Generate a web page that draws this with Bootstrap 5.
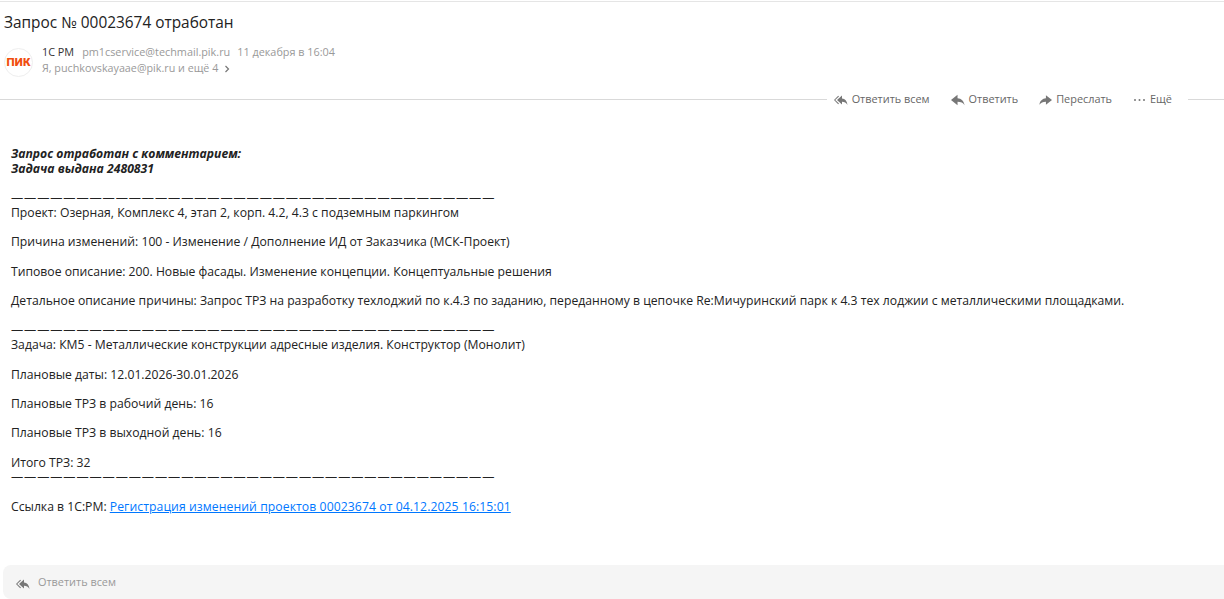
<!DOCTYPE html>
<html lang="ru">
<head>
    <meta charset="UTF-8">
    <meta name="viewport" content="width=device-width, initial-scale=1.0">
    <title>Запрос № 00023674 отработан</title>
    <link href="https://cdn.jsdelivr.net/npm/bootstrap@5.3.0/dist/css/bootstrap.min.css" rel="stylesheet">
    <style>
        html, body { height: 599px; overflow: hidden; }
        body { font-family: "Open Sans", "Liberation Sans", sans-serif; background: #fff; color: #000; border-top: 1px solid #e5e5e5; margin-top: 1px; }
        .mail-subject { font-size: 15.4px; line-height: 22px; padding: 10px 0 0 4px; color: #222; }
        .mail-head { padding: 14px 0 0 4px; height: 65px; }
        .pik-logo { width: 29px; height: 29px; border: 1px solid #eee; color: #f04e0f; font: 900 11.5px/26px Roboto, sans-serif; letter-spacing: .2px; text-align: center; }
        .mail-meta { font-size: 10.85px; line-height: 16px; color: #999; margin-left: 9px; margin-top: -4px; }
        .mail-from { color: #333; margin-right: 8px; }
        .mail-date { margin-left: 7px; }
        .mail-to { font-size: 10.75px; }
        .mail-actions { height: 1px; background: #d9d9d9; }
        .mail-actions-inner { background: #fff; margin-right: 36px; padding: 0 16px 0 7px; height: 20px; transform: translateY(-10px); gap: 21px; font-size: 10.9px; color: #666; }
        .act-ico { fill: #777; margin-top: 3px; }
        .mail-text { font-size: 12.2px; line-height: 14.7px; padding: 47px 0 0 11px; color: #222; height: 465px; }
        .mail-text a { color: #07f; letter-spacing: .08px; }
        .dash-line { letter-spacing: .9px; }
        .reply-box { height: 34px; margin: 0 0 0 3px; background: #f5f5f5; border-radius: 8px 0 0 8px; padding-left: 13px; gap: 8px; font-size: 10.9px; color: #999; }
    </style>
</head>
<body>
    <div class="mail-subject">Запрос № 00023674 отработан</div>
    <div class="mail-head d-flex">
        <div class="pik-logo rounded-circle flex-shrink-0">ПИК</div>
        <div class="mail-meta">
            <div><span class="mail-from">1С РМ</span>pm1cservice@techmail.pik.ru<span class="mail-date">11 декабря в 16:04</span></div>
            <div class="mail-to">Я, puchkovskayaae@pik.ru и ещё 4 &nbsp;<svg width="6" height="8" viewBox="0 0 6 8"><path d="M1.500 1l3 3-3 3" fill="none" stroke="#777" stroke-width="1.200"/></svg></div>
        </div>
    </div>
    <div class="mail-actions d-flex justify-content-end">
        <div class="mail-actions-inner d-flex align-items-center">
            <span class="d-flex align-items-center gap-1"><svg class="act-ico" width="14" height="12" viewBox="0 0 14 12"><path d="M8 1.500v3c3 .3 5 2.500 5.500 6.500-1.300-2.200-3-3.200-5.500-3.200V10.500L3 6z"/><path d="M5 2.500 1.200 6 5 9.500l-.8.800L0 6l4.200-4.300z"/></svg>Ответить всем</span>
            <span class="d-flex align-items-center gap-1"><svg class="act-ico" width="14" height="12" viewBox="0 0 15 12"><path d="M7 .5v3.500c4 .3 7 3 7.500 7.500C13 9.200 10.500 8 7 8v3.500L0 6z"/></svg>Ответить</span>
            <span class="d-flex align-items-center gap-1"><svg class="act-ico" width="13" height="12" viewBox="0 0 15 12"><path d="M8 .5v3.500c-4 .3-7 3-7.500 7.500C2 9.200 4.500 8 8 8v3.500L15 6z"/></svg>Переслать</span>
            <span class="d-flex align-items-center gap-1"><svg class="act-ico" width="13" height="12" viewBox="0 0 13 12"><circle cx="2" cy="6" r="1"/><circle cx="6.500" cy="6" r="1"/><circle cx="11" cy="6" r="1"/></svg>Ещё</span>
        </div>
    </div>
    <div class="mail-text">
        <b><i>Запрос отработан с комментарием:<br>Задача выдана 2480831</i></b><br><br>
        <span class="dash-line">—————————————————————————————————————</span><br>
        Проект: Озерная, Комплекс 4, этап 2, корп. 4.2, 4.3 с подземным паркингом<br><br>
        Причина изменений: 100 - Изменение / Дополнение ИД от Заказчика (МСК-Проект)<br><br>
        Типовое описание: 200. Новые фасады. Изменение концепции. Концептуальные решения<br><br>
        Детальное описание причины: Запрос ТРЗ на разработку техлоджий по к.4.3 по заданию, переданному в цепочке Re:Мичуринский парк к 4.3 тех лоджии с металлическими площадками.<br><br>
        <span class="dash-line">—————————————————————————————————————</span><br>
        Задача: КМ5 - Металлические конструкции адресные изделия. Конструктор (Монолит)<br><br>
        Плановые даты: 12.01.2026-30.01.2026<br><br>
        Плановые ТРЗ в рабочий день: 16<br><br>
        Плановые ТРЗ в выходной день: 16<br><br>
        Итого ТРЗ: 32<br>
        <span class="dash-line">—————————————————————————————————————</span><br><br>
        Ссылка в 1С:РМ: <a href="#">Регистрация изменений проектов 00023674 от 04.12.2025 16:15:01</a>
    </div>
    <div class="reply-box d-flex align-items-center">
        <svg class="act-ico" width="14" height="12" viewBox="0 0 14 12"><path d="M8 1.500v3c3 .3 5 2.500 5.500 6.500-1.300-2.200-3-3.200-5.500-3.200V10.500L3 6z"/><path d="M5 2.500 1.200 6 5 9.500l-.8.800L0 6l4.200-4.300z"/></svg>
        <span>Ответить всем</span>
    </div>
    <script src="https://cdn.jsdelivr.net/npm/bootstrap@5.3.0/dist/js/bootstrap.bundle.min.js"></script>
</body>
</html>
